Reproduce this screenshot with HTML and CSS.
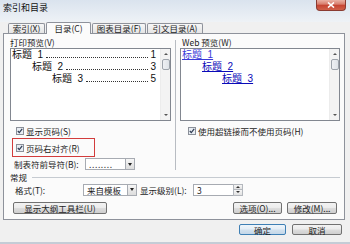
FILE: index.html
```html
<!DOCTYPE html>
<html lang="zh-CN">
<head>
<meta charset="utf-8">
<title>索引和目录</title>
<link rel="stylesheet" href="styles.css">
</head>
<body>
<div class="win">
  <div class="titlebar">
    <span class="title">索引和目录</span>
    <span class="close"><svg width="8" height="6" viewBox="0 0 8 6"><path d="M1 0.5 L7 5.5 M7 0.5 L1 5.5" stroke="#fff" stroke-width="1.6"/></svg></span>
  </div>
  <div class="client">
    <div class="tabs">
      <div class="tab t1">索引(<u>X</u>)</div>
      <div class="tab t2 active">目录(<u>C</u>)</div>
      <div class="tab t3">图表目录(<u>F</u>)</div>
      <div class="tab t4">引文目录(<u>A</u>)</div>
    </div>
    <div class="panel">
      <div class="cols">
        <div class="col">
          <div class="lbl">打印预览(<u>V</u>)</div>
          <div class="preview">
            <div class="pv-lines">
              <div class="pvline i1"><span class="pt">标题  1</span><span class="dots"></span><span>1</span></div>
              <div class="pvline i2"><span class="pt">标题  2</span><span class="dots"></span><span>3</span></div>
              <div class="pvline i3"><span class="pt">标题  3</span><span class="dots"></span><span>5</span></div>
            </div>
            <div class="sb">
              <span class="arr up"></span>
              <span class="thumb"></span>
              <span class="arr down"></span>
            </div>
          </div>
          <div class="chk c1"><svg class="box" width="8" height="8" viewBox="0 0 8 8"><rect x=".5" y=".5" width="7" height="7" fill="#e8edf3" stroke="#8b9099"/><path d="M1.8 4 L3.3 5.6 L6.2 1.9" stroke="#2f3b52" stroke-width="1.2" fill="none"/></svg><span>显示页码(<u>S</u>)</span></div>
          <div class="hl"><div class="chk"><svg class="box" width="8" height="8" viewBox="0 0 8 8"><rect x=".5" y=".5" width="7" height="7" fill="#e8edf3" stroke="#8b9099"/><path d="M1.8 4 L3.3 5.6 L6.2 1.9" stroke="#2f3b52" stroke-width="1.2" fill="none"/></svg><span>页码右对齐(<u>R</u>)</span></div></div>
          <div class="row r-tab">
            <span class="rlbl w71">制表符前导符(<u>B</u>):</span>
            <span class="combo w50"><span class="ctext leader">........</span><span class="cbtn"><i></i></span></span>
          </div>
        </div>
        <div class="divider"></div>
        <div class="col">
          <div class="lbl web">Web 预览(<u>W</u>)</div>
          <div class="preview">
            <div class="pv-lines">
              <div class="pvline i1"><span class="pt link l1">标题  1</span></div>
              <div class="pvline i2"><span class="pt link">标题  2</span></div>
              <div class="pvline i3"><span class="pt link">标题  3</span></div>
            </div>
            <div class="sb">
              <span class="arr up"></span>
              <span class="thumb"></span>
              <span class="arr down"></span>
            </div>
          </div>
          <div class="chk c1 cr"><svg class="box" width="8" height="8" viewBox="0 0 8 8"><rect x=".5" y=".5" width="7" height="7" fill="#e8edf3" stroke="#8b9099"/><path d="M1.8 4 L3.3 5.6 L6.2 1.9" stroke="#2f3b52" stroke-width="1.2" fill="none"/></svg><span>使用超链接而不使用页码(<u>H</u>)</span></div>
        </div>
      </div>
      <div class="group"><span>常规</span><span class="gline"></span></div>
      <div class="row r-fmt">
        <span class="rlbl w68">格式(<u>T</u>):</span>
        <span class="combo w54"><span class="ctext">来自模板</span><span class="cbtn"><i></i></span></span>
        <span class="rlbl w53 ml3">显示级别(<u>L</u>):</span>
        <span class="spin"><span class="ctext">3</span><span class="sbtns"><i class="su"></i><i class="sd"></i></span></span>
      </div>
      <div class="row r-btn">
        <span class="btn w94">显示大纲工具栏(<u>U</u>)</span>
        <span class="btn w49 push">选项(<u>O</u>)...</span>
        <span class="btn w50">修改(<u>M</u>)...</span>
      </div>
    </div>
    <div class="footer">
      <span class="btn def w47">确定</span>
      <span class="btn w50">取消</span>
    </div>
  </div>
</div>
</body>
</html>
```
FILE: styles.css
```css
* { box-sizing: border-box; margin: 0; padding: 0; }
html, body { width: 350px; height: 244px; overflow: hidden; }
body {
  font-family: "Noto Sans CJK SC", "Noto Sans", sans-serif;
  font-size: 8.5px;
  color: #1c1c1c;
  background: #e9eef4;
}
u { text-decoration: none; }
.win {
  width: 350px;
  height: 244px;
  display: flex;
  flex-direction: column;
  background: #f0f0f0;
  border-bottom: 2px solid #c4ccd6;
}
.titlebar {
  height: 22px;
  flex: none;
  display: flex;
  justify-content: space-between;
  align-items: flex-start;
  padding: 0 4px 0 3px;
  background: linear-gradient(#dae3ee, #e6ecf3 60%, #eef2f6);
}
.title { font-size: 9px; line-height: 12px; padding-top: 2px; color: #111; }
.close {
  width: 30px;
  height: 11px;
  display: flex;
  align-items: center;
  justify-content: center;
  border: 1px solid #8a3b31;
  border-top: none;
  border-radius: 0 0 4px 4px;
  background: linear-gradient(#eab1a4, #d98070 40%, #c64533 55%, #d0614a);
}
.client {
  flex: 1;
  display: flex;
  flex-direction: column;
  padding: 0 5px 0 3px;
}
.tabs {
  height: 11px;
  display: flex;
  align-items: flex-end;
  gap: 1px;
  padding-left: 5px;
}
.tab {
  height: 10px;
  display: flex;
  align-items: center;
  justify-content: center;
  line-height: 9px;
  border: 1px solid #8e929b;
  border-bottom: none;
  border-radius: 2px 2px 0 0;
  background: linear-gradient(#f7f7f7, #e4e4e4);
}
.tab.active {
  height: 12px;
  margin-bottom: -1px;
  background: #fbfbfb;
  position: relative;
  z-index: 1;
}
.t1 { width: 37px; }
.t2 { width: 45px; }
.t3 { width: 54px; }
.t4 { width: 56px; }
.panel {
  height: 187px;
  border: 1px solid #8e929b;
  background: #fbfbfb;
  padding: 3px 4px 5px 6px;
  display: flex;
  flex-direction: column;
}
.cols {
  display: grid;
  grid-template-columns: 161px 1px 160px;
  column-gap: 4px;
}
.col { display: flex; flex-direction: column; }
.divider {
  margin-top: 3px;
  background: #b8bcc2;
}
.lbl { height: 11px; line-height: 11px; }
.lbl.web { padding-left: 2px; }
.preview {
  height: 73px;
  border: 1px solid #828790;
  background: #fff;
  display: flex;
}
.pv-lines { flex: 1; padding: 0 4px 0 1px; }
.pvline {
  height: 12px;
  line-height: 12px;
  font-family: "Liberation Sans", "Noto Sans CJK SC", sans-serif;
  font-size: 10px;
  display: flex;
  align-items: baseline;
  color: #111;
}
.pt { white-space: pre; }
.pvline.i2 { padding-left: 20px; }
.pvline.i3 { padding-left: 40px; }
.dots {
  flex: 1;
  height: 0;
  margin: 0 2px 0 3px;
  border-bottom: 1px dotted #333;
}
.link { color: #0a0ab8; text-decoration: underline; }
.link.l1 { color: #3a3ad8; }
.sb {
  width: 10px;
  flex: none;
  display: flex;
  flex-direction: column;
  align-items: center;
  background: #f3f3f3;
  border-left: 1px solid #ececec;
}
.arr { width: 0; height: 0; border-left: 2px solid transparent; border-right: 2px solid transparent; }
.arr.up { margin-top: 4px; border-bottom: 2px solid #555; }
.arr.down { margin-top: auto; margin-bottom: 4px; border-top: 2px solid #555; }
.thumb {
  width: 8px;
  height: 11px;
  margin-top: 4px;
  border: 1px solid #9da3ab;
  border-radius: 2px;
  background: linear-gradient(90deg, #eef0f3, #dfe3e8);
}
.chk {
  display: flex;
  align-items: center;
  gap: 2px;
  height: 12px;
  line-height: 12px;
}
.chk .box { flex: none; }
.c1 { margin-top: 4px; padding-left: 6px; }
.cr { padding-left: 8px; }
.hl {
  margin: 1px 0 0 2px;
  width: 83px;
  height: 19px;
  border: 1px solid #d23c3c;
  padding-left: 3px;
  display: flex;
  align-items: center;
}
.row { display: flex; align-items: center; }
.r-tab { margin-top: 1px; height: 12px; padding-left: 4px; }
.rlbl { flex: none; white-space: nowrap; }
.w71 { width: 71px; }
.w68 { width: 68px; }
.w53 { width: 53px; }
.ml3 { margin-left: 3px; }
.combo, .spin {
  flex: none;
  height: 12px;
  display: flex;
  border: 1px solid #a7abb2;
  background: #fff;
}
.w50 { width: 50px; }
.w54 { width: 54px; }
.w94 { width: 94px; }
.w49 { width: 49px; }
.w47 { width: 47px; }
.ctext { flex: 1; padding-left: 3px; line-height: 10px; white-space: nowrap; overflow: hidden; }
.leader { letter-spacing: 0.6px; color: #444; }
.cbtn {
  width: 10px;
  flex: none;
  display: flex;
  align-items: center;
  justify-content: center;
  border: 1px solid #a7abb2;
  margin: -1px -1px -1px 0;
  background: linear-gradient(#f6f6f6, #dcdcdc);
}
.cbtn i {
  width: 0; height: 0;
  border-left: 2.5px solid transparent;
  border-right: 2.5px solid transparent;
  border-top: 3px solid #222;
}
.group {
  margin-top: 1px;
  height: 12px;
  display: flex;
  align-items: center;
  gap: 5px;
}
.gline { flex: 1; border-top: 1px solid #c6cbd1; }
.r-fmt { height: 13px; padding-left: 5px; }
.spin { width: 50px; }
.sbtns {
  width: 10px;
  flex: none;
  display: flex;
  flex-direction: column;
  margin: -1px -1px -1px 0;
}
.sbtns i {
  flex: 1;
  display: flex;
  justify-content: center;
  align-items: center;
  border: 1px solid #b4b8be;
  background: linear-gradient(#f6f6f6, #e2e2e2);
}
.sbtns i.sd { border-top: none; }
.sbtns i::after {
  content: "";
  width: 0; height: 0;
  border-left: 2px solid transparent;
  border-right: 2px solid transparent;
}
.sbtns i.su::after { border-bottom: 2px solid #333; }
.sbtns i.sd::after { border-top: 2px solid #333; }
.r-btn { margin-top: 6px; height: 12px; padding-left: 3px; padding-right: 3px; gap: 5px; }
.push { margin-left: auto; }
.btn {
  flex: none;
  height: 12px;
  display: flex;
  align-items: center;
  justify-content: center;
  line-height: 10px;
  white-space: nowrap;
  border: 1px solid #717171;
  border-radius: 2px;
  background: linear-gradient(#f3f3f3, #ebebeb 48%, #dddddd 52%, #cfcfcf);
}
.btn.def {
  border-color: #3e7fb4;
  background: linear-gradient(#eef5fb, #e3edf6 48%, #d2e1ee 52%, #c4d7e8);
}
.footer {
  display: flex;
  justify-content: flex-end;
  gap: 6px;
  padding: 4px 3px 0 0;
}
.footer .btn { height: 11px; }
```
